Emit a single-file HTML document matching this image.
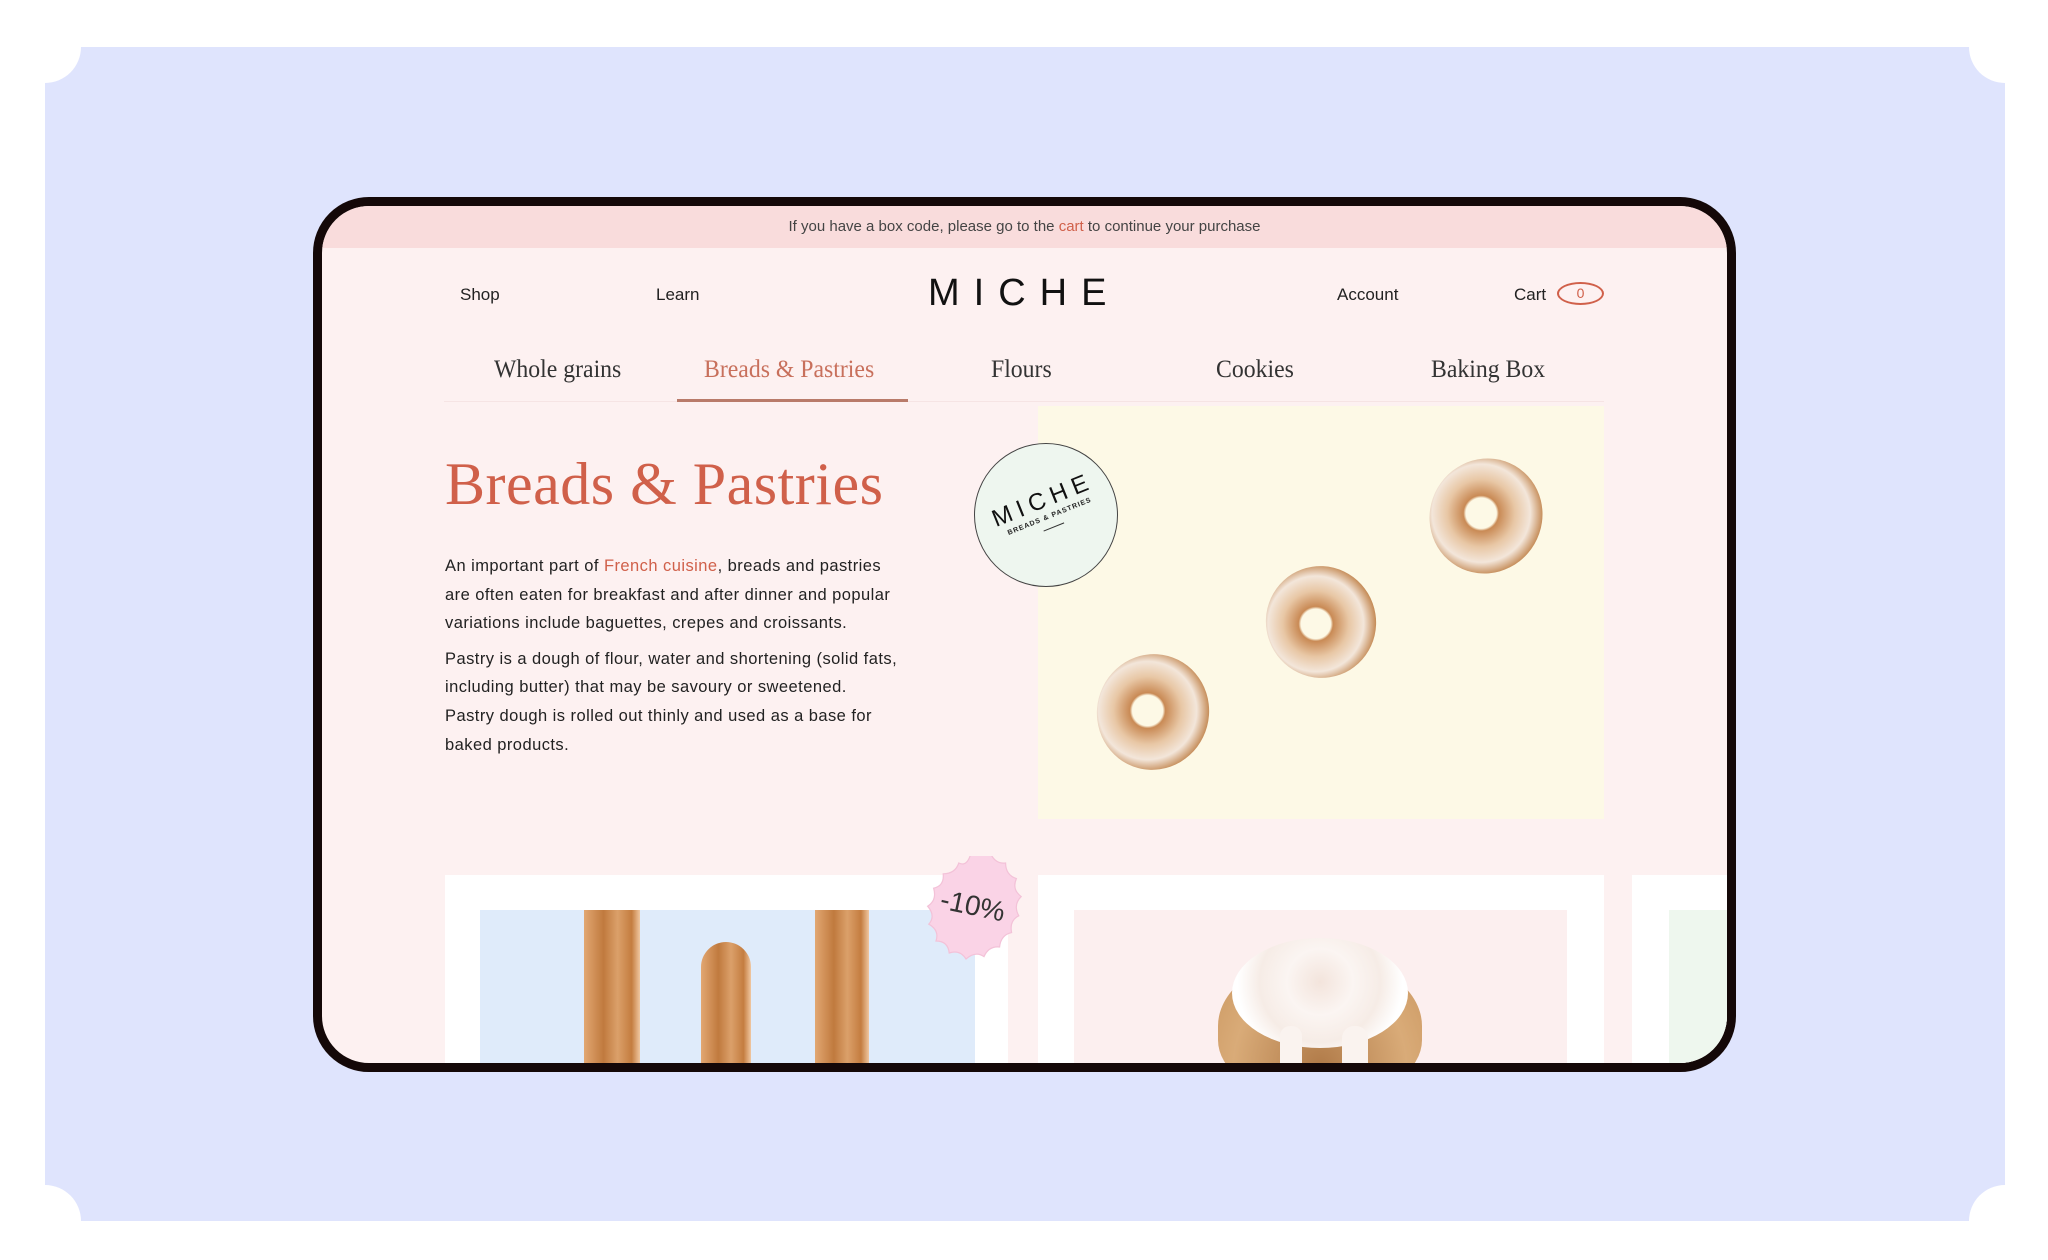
<!DOCTYPE html>
<html><head><meta charset="utf-8"><style>
*{margin:0;padding:0;box-sizing:border-box}
body{width:2048px;height:1260px;background:#fff;position:relative;overflow:hidden;font-family:"Liberation Sans",sans-serif}
.bg{position:absolute;left:45px;top:47px;width:1960px;height:1174px;background:#dfe4fd}
.n{position:absolute;width:72px;height:72px;border-radius:50%;background:#fff}
.dev{position:absolute;left:313px;top:197px;width:1423px;height:875px;border:9px solid #140808;border-radius:56px;background:#fdf1f1;overflow:hidden}
.a{position:absolute}
.ban{left:0;top:0;width:100%;height:42px;background:#f9dcdc;text-align:center;font-size:15px;line-height:42px;color:#444}
.nav{font-size:17px;color:#222;top:79px}
.tab{font-family:"Liberation Serif",serif;font-size:25px;color:#333;top:150px;transform:scaleX(.95);transform-origin:left}
p{font-size:16.5px;line-height:28.6px;color:#222;letter-spacing:.45px}
.bag{position:absolute;border-radius:28px 28px 28px 28px;background:linear-gradient(90deg,#e2a772,#c07a3e 35%,#dba06a 60%,#c47d40 85%,#f0c7a0)}
.don{position:absolute;border-radius:50%;background:radial-gradient(circle at 45% 50%,transparent 18%,#c98a55 21%,#e8c7a5 40%,#f3e6da 58%,#c2864f 74%,#a86a3b 78%,transparent 80%)}
</style></head><body>
<div class="bg"></div>
<div class="n" style="left:9px;top:11px"></div>
<div class="n" style="left:1969px;top:11px"></div>
<div class="n" style="left:9px;top:1185px"></div>
<div class="n" style="left:1969px;top:1185px"></div>
<div class="dev">
 <div class="a ban">If you have a box code, please go to the <span style="color:#d0604a">cart</span> to continue your purchase</div>
 <div class="a nav" style="left:138px">Shop</div>
 <div class="a nav" style="left:334px">Learn</div>
 <div class="a" style="left:606px;top:66px;font-size:38px;letter-spacing:14px;color:#111">MICHE</div>
 <div class="a nav" style="left:1015px">Account</div>
 <div class="a nav" style="left:1192px">Cart</div>
 <div class="a" style="left:1235px;top:76px;width:47px;height:23px;border:2px solid #d0604a;border-radius:50%;text-align:center;font-size:14px;line-height:19px;color:#d0604a">0</div>
 <div class="a tab" style="left:172px">Whole grains</div>
 <div class="a tab" style="left:382px;color:#c8705c">Breads &amp; Pastries</div>
 <div class="a tab" style="left:669px">Flours</div>
 <div class="a tab" style="left:894px">Cookies</div>
 <div class="a tab" style="left:1109px">Baking Box</div>
 <div class="a" style="left:122px;top:195px;width:1160px;height:1px;background:#f6e4e4"></div>
 <div class="a" style="left:355px;top:193px;width:231px;height:3px;background:#b97b6a"></div>
 <div class="a" style="left:123px;top:244px;font-family:'Liberation Serif',serif;font-size:60px;color:#d0604a;letter-spacing:.5px">Breads &amp; Pastries</div>
 <div class="a" style="left:123px;top:346px;width:460px">
  <p>An important part of <span style="color:#d0604a">French cuisine</span>, breads and pastries are often eaten for breakfast and after dinner and popular variations include baguettes, crepes and croissants.</p>
  <p style="margin-top:7px;white-space:nowrap">Pastry is a dough of flour, water and shortening (solid fats,<br>including butter) that may be savoury or sweetened.<br>Pastry dough is rolled out thinly and used as a base for<br>baked products.</p>
 </div>
 <div class="a" style="left:716px;top:200px;width:566px;height:413px;background:#fdf9e6"></div>
 <div class="don" style="left:1108px;top:252px;width:112px;height:116px;transform:rotate(30deg)"></div>
 <div class="don" style="left:944px;top:360px;width:110px;height:112px;transform:rotate(-20deg)"></div>
 <div class="don" style="left:775px;top:448px;width:112px;height:116px;transform:rotate(15deg)"></div>
 <div class="a" style="left:652px;top:237px;width:144px;height:144px;border-radius:50%;background:#eef6ef;border:1.5px solid #444"></div>
 <div class="a" style="left:662px;top:280px;width:124px;text-align:center;transform:rotate(-22deg)">
  <div style="font-size:24px;letter-spacing:6px;color:#111">MICHE</div>
  <div style="font-size:7px;letter-spacing:1px;color:#222;font-weight:bold">BREADS &amp; PASTRIES</div>
  <div style="width:22px;height:1px;background:#333;margin:7px auto 0"></div>
 </div>
 <div class="a" style="left:123px;top:669px;width:563px;height:250px;background:#fff"></div>
 <div class="a" style="left:158px;top:704px;width:495px;height:250px;background:#dfebfa"></div>
 <div class="bag" style="left:262px;top:704px;width:56px;height:180px;border-radius:0 0 26px 26px"></div>
 <div class="bag" style="left:379px;top:736px;width:50px;height:180px"></div>
 <div class="bag" style="left:493px;top:704px;width:54px;height:180px;border-radius:0 0 26px 26px"></div>
 <div class="a" style="left:716px;top:669px;width:566px;height:250px;background:#fff"></div>
 <div class="a" style="left:752px;top:704px;width:493px;height:250px;background:#fcefef"></div>
 <div class="a" style="left:896px;top:750px;width:204px;height:140px;border-radius:50% 50% 40% 40%;background:radial-gradient(ellipse at 50% 80%,#b07a48,#d9ab78 60%,#c9955e)"></div>
 <div class="a" style="left:910px;top:732px;width:176px;height:110px;border-radius:50%;background:radial-gradient(circle at 50% 40%,#f3e4dc,#fbf5f2 30%,#f6ece6 55%,#fff 75%)"></div>
 <div class="a" style="left:958px;top:820px;width:22px;height:60px;border-radius:10px;background:#faf3ef"></div>
 <div class="a" style="left:1020px;top:820px;width:26px;height:55px;border-radius:12px;background:#faf3ef"></div>
 <div class="a" style="left:1310px;top:669px;width:120px;height:250px;background:#fff"></div>
 <div class="a" style="left:1347px;top:704px;width:80px;height:250px;background:#eef7ee"></div>
 <svg class="a" style="left:595px;top:650px" width="110" height="110" viewBox="-55 -55 110 110">
  <path d="M0,-52 Q8,-44 15,-49 Q19,-39 28,-40 Q28,-30 37,-27 Q33,-18 41,-12 Q34,-5 39,4 Q31,8 33,18 Q24,20 23,30 Q14,29 10,38 Q3,33 -5,40 Q-10,32 -19,35 Q-20,25 -30,25 Q-27,16 -36,11 Q-30,4 -37,-4 Q-29,-9 -32,-19 Q-23,-21 -24,-31 Q-14,-31 -11,-40 Q-3,-36 0,-52Z" transform="scale(1.2)" fill="#fad3e6" stroke="#f3c2d8" stroke-width="1"/>
 </svg>
 <div class="a" style="left:618px;top:684px;font-size:28px;color:#333;transform:rotate(12deg);font-family:'Liberation Sans',sans-serif;font-weight:300">-10%</div>
</div>
</body></html>
